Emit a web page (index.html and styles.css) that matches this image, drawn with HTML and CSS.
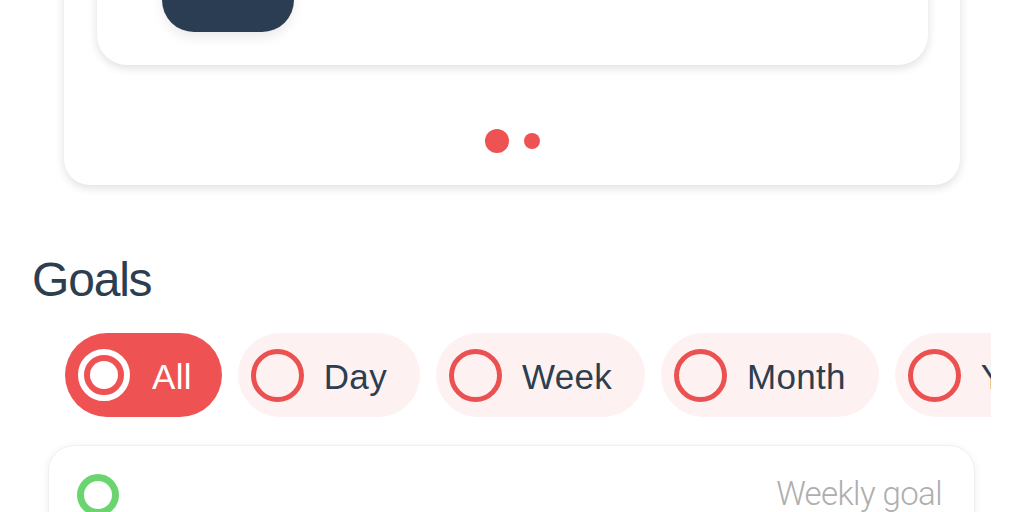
FILE: index.html
```html
<!DOCTYPE html>
<html lang="en">
<head>
<meta charset="utf-8">
<title>Goals</title>
<link rel="stylesheet" href="styles.css">
</head>
<body>
<div class="page">
  <section class="summary-card">
    <div class="slide-card">
      <button class="dark-btn" type="button"><span class="btn-glyph"></span></button>
    </div>
    <div class="pager">
      <span class="dot dot-active"></span>
      <span class="dot"></span>
    </div>
  </section>

  <h1 class="section-title">Goals</h1>

  <div class="chip-scroller">
    <div class="chip-row">
      <div class="chip chip-active"><span class="radio radio-on"></span><span class="chip-label">All</span></div>
      <div class="chip"><span class="radio"></span><span class="chip-label">Day</span></div>
      <div class="chip"><span class="radio"></span><span class="chip-label">Week</span></div>
      <div class="chip"><span class="radio"></span><span class="chip-label">Month</span></div>
      <div class="chip"><span class="radio"></span><span class="chip-label">Year</span></div>
    </div>
  </div>

  <section class="goal-card">
    <span class="goal-ring"></span>
    <span class="goal-type">Weekly goal</span>
  </section>
</div>
</body>
</html>
```
FILE: styles.css
```css
* { box-sizing: border-box; }
html, body { margin: 0; padding: 0; background: #ffffff; }
body {
  width: 1024px;
  height: 512px;
  overflow: hidden;
  font-family: "Liberation Sans", Arial, sans-serif;
  color: #2c3e50;
}
.page { display: flex; flex-direction: column; }

.summary-card {
  margin: -120px 0 0 64px;
  width: 896px;
  padding: 20px 32px 32px 33px;
  background: #fff;
  border-radius: 26px;
  box-shadow: 0 3px 10px rgba(0, 0, 0, 0.13);
}
.slide-card {
  height: 165px;
  background: #fff;
  border-radius: 30px;
  box-shadow: 0 3px 10px rgba(0, 0, 0, 0.13);
  display: flex;
  flex-direction: column;
  justify-content: flex-end;
  padding: 0 0 33px 65px;
}
.dark-btn {
  width: 132px;
  height: 80px;
  border: 0;
  padding: 0;
  background: #2b3d52;
  border-radius: 32px;
  box-shadow: 0 6px 12px rgba(0, 0, 0, 0.08);
  position: relative;
}
.btn-glyph {
  position: absolute;
  left: 68px;
  top: 44px;
  width: 6px;
  height: 4px;
  background: #dfe4ea;
  border-radius: 0 0 2px 2px;
}
.pager {
  margin-top: 64px;
  height: 24px;
  display: flex;
  align-items: center;
  justify-content: center;
  gap: 15px;
}
.dot {
  width: 16px;
  height: 16px;
  border-radius: 50%;
  background: #ee5253;
}
.dot-active { width: 24px; height: 24px; }

.section-title {
  margin: 71px 0 0 32px;
  font-size: 48px;
  line-height: 48px;
  font-weight: 400;
  letter-spacing: -1.2px;
  color: #2c3e50;
}

.chip-scroller {
  margin: 29px 0 0 48px;
  width: 943px;
  overflow: hidden;
}
.chip-row {
  display: flex;
  gap: 16px;
  padding-left: 17px;
  width: max-content;
}
.chip {
  height: 84px;
  border-radius: 42px;
  background: #fdf2f1;
  display: flex;
  align-items: center;
  gap: 20px;
  padding: 0 33px 0 13px;
}
.chip-active { background: #ee5253; gap: 22px; padding-right: 30px; }
.chip-label {
  font-size: 35px;
  color: #2c3e50;
  letter-spacing: 0.3px;
  margin-top: 4px;
}
.chip-active .chip-label { color: #fff; }
.radio {
  width: 53px;
  height: 53px;
  border-radius: 50%;
  border: 5px solid #ec5151;
  flex: none;
}
.radio-on {
  width: 52px;
  height: 52px;
  border: 6px solid #fff;
  background: #ee5253;
  position: relative;
}
.radio-on::after {
  content: "";
  position: absolute;
  left: 6px;
  top: 6px;
  width: 28px;
  height: 28px;
  border-radius: 50%;
  background: #fff;
}

.goal-card {
  margin: 28px 0 0 48px;
  width: 927px;
  height: 140px;
  background: #fff;
  border: 1px solid #f0f0f0;
  border-radius: 26px;
  box-shadow: 0 2px 8px rgba(0, 0, 0, 0.07);
  display: flex;
  justify-content: space-between;
  align-items: flex-start;
  padding: 28px 32px 0 28px;
}
.goal-ring {
  width: 42px;
  height: 42px;
  border-radius: 50%;
  border: 7px solid #6ad56f;
}
.goal-type {
  font-family: Roboto, "Liberation Sans", sans-serif;
  font-weight: 300;
  font-size: 33px;
  color: #aeaeae;
  letter-spacing: -0.6px;
  line-height: 40px;
  margin-top: 0;
}
```
